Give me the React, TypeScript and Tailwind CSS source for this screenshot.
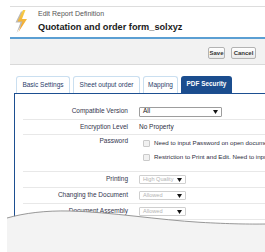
import React from "react";

const tabs = [
  { name: "Basic Settings", width: "w-[54px]" },
  { name: "Sheet output order", width: "w-[67px]" },
  { name: "Mapping", width: "w-[35px]" },
];

const Arrow = () => (
  <svg width="5" height="4" viewBox="0 0 5 4" className="shrink-0">
    <polygon points="0,0 5,0 2.5,4" fill="#151515" />
  </svg>
);

interface SelectProps {
  value: string;
  disabled?: boolean;
}

const SelectBox: React.FC<SelectProps> = ({ value, disabled }) => {
  if (disabled) {
    return (
      <div className="flex h-[9px] w-[47px] items-center justify-between rounded-[1px] border border-[#cfcfcf] bg-white pl-[3px] pr-[3px]">
        <span className="whitespace-nowrap text-[5.6px] leading-none text-[#b3b3b3]">{value}</span>
        <Arrow />
      </div>
    );
  }
  return (
    <div className="flex h-[10px] w-[83px] items-center justify-between rounded-[1px] border border-[#9d9d9d] bg-white pl-[3px] pr-[3px]">
      <span className="text-[6.5px] leading-none text-[#222]">{value}</span>
      <Arrow />
    </div>
  );
};

interface RowProps {
  label: string;
  className: string;
  valueClass: string;
  children: React.ReactNode;
}

const Row: React.FC<RowProps> = ({ label, className, valueClass, children }) => (
  <div className={`flex border-b border-[#e8e8e8] ${className}`}>
    <div className="w-[105px] shrink-0 text-right text-[6.5px] leading-none text-[#34354d]">{label}</div>
    <div className={`ml-[11px] flex min-w-0 flex-1 ${valueClass}`}>{children}</div>
  </div>
);

const Checkbox: React.FC<{ text: string }> = ({ text }) => (
  <div className="flex h-[14px] items-center whitespace-nowrap">
    <div className="ml-[4px] h-[7px] w-[7px] shrink-0 rounded-[1px] border border-[#cacaca] bg-[#f1f1f1]" />
    <span className="ml-[4px] text-[6.2px] leading-none text-[#2d2d3d]">{text}</span>
  </div>
);

const Bolt = () => (
  <svg width="13" height="23" viewBox="0 0 13 23">
    <defs>
      <linearGradient id="boltFill" x1="0" y1="0" x2="0" y2="1">
        <stop offset="0" stopColor="#f7cf4a" />
        <stop offset="1" stopColor="#ef9a2a" />
      </linearGradient>
    </defs>
    <polygon points="7,1 1.5,12 6.5,12 2.5,22.5 11,9.5 6,9.5 9.5,1" fill="#b9b9b9" transform="translate(-1,0.5)" />
    <polygon points="8,0 2.5,11.5 7.5,11.5 3.5,22 12,9 7,9 10.5,0" fill="url(#boltFill)" />
  </svg>
);

export default function App() {
  return (
    <div className="relative h-[252px] w-[265px] overflow-hidden bg-white font-['Liberation_Sans',Arial,sans-serif]">
      <div className="ml-[10px] pt-[6px]">
        {/* header */}
        <div className="flex h-[31px] border-t border-[#dddddd] pl-[5px] pt-[3px]">
          <Bolt />
          <div className="ml-[10px]">
            <div className="text-[7px] leading-[8px] text-[#555]">Edit Report Definition</div>
            <div className="mt-[4px] text-[9.2px] font-bold leading-[11px] text-[#1b1b1b]">
              Quotation and order form_solxyz
            </div>
          </div>
        </div>
        <div className="h-[2px] bg-[#5b9fd3]" />

        {/* toolbar */}
        <div className="flex h-[26px] justify-end gap-[6px] border-b border-[#d9d9d9] bg-[#f2f2f2] pr-[9px] pt-[8px]">
          <button className="h-[12px] w-[17px] rounded-[2px] border border-[#b3b3b3] bg-gradient-to-b from-white to-[#e9e9e9] text-[6px] font-bold leading-none text-[#333]">
            Save
          </button>
          <button className="h-[12px] w-[25px] rounded-[2px] border border-[#b3b3b3] bg-gradient-to-b from-white to-[#e9e9e9] text-[6px] font-bold leading-none text-[#333]">
            Cancel
          </button>
        </div>

        {/* tabs */}
        <div className="mt-[11px] flex gap-[3px] pl-[6px]">
          {tabs.map((t) => (
            <div
              key={t.name}
              className={`flex h-[17px] ${t.width} items-center justify-center rounded-t-[3px] border border-b-0 border-[#cadff0] bg-white text-[6.5px] leading-none text-[#2b3d6a]`}
            >
              {t.name}
            </div>
          ))}
          <div className="flex h-[17px] w-[51px] items-center justify-center rounded-t-[3px] bg-[#1b4d8e] text-[6.4px] font-bold leading-none text-white">
            PDF Security
          </div>
        </div>

        {/* panel */}
        <div className="ml-[4px] h-[140px] border-l border-t border-[#1d4f91] pl-[8px] pt-[10px]">
          <Row label="Compatible Version" className="h-[16px] items-center" valueClass="items-center">
            <SelectBox value="All" />
          </Row>
          <Row label="Encryption Level" className="h-[15px] items-center" valueClass="items-center">
            <span className="text-[6.5px] leading-none text-[#2d2d3d]">No Property</span>
          </Row>
          <Row label="Password" className="h-[37px] items-start pt-[3px]" valueClass="-mt-[2px] flex-col">
            <Checkbox text="Need to input Password on open document" />
            <Checkbox text="Restriction to Print and Edit. Need to input Password" />
          </Row>
          <Row label="Printing" className="h-[16px] items-center" valueClass="items-center">
            <SelectBox value="High Quality" disabled />
          </Row>
          <Row label="Changing the Document" className="h-[16px] items-center" valueClass="items-center">
            <SelectBox value="Allowed" disabled />
          </Row>
          <Row label="Document Assembly" className="h-[16px] items-center" valueClass="items-center">
            <SelectBox value="Allowed" disabled />
          </Row>
        </div>
      </div>

      {/* torn edge */}
      <svg className="absolute left-0 top-[200px]" width="265" height="52" viewBox="0 0 265 52">
        <path
          d="M7,18 C25,13 45,10.5 70,11 C110,12 160,20 200,22.3 C230,24 250,24.2 265,24 L265,52 L7,52 Z"
          fill="#f3f3f3"
        />
        <path
          d="M7,18 C25,13 45,10.5 70,11 C110,12 160,20 200,22.3 C230,24 250,24.2 265,24"
          fill="none"
          stroke="#8c8c8c"
          strokeWidth="0.9"
        />
      </svg>
    </div>
  );
}
